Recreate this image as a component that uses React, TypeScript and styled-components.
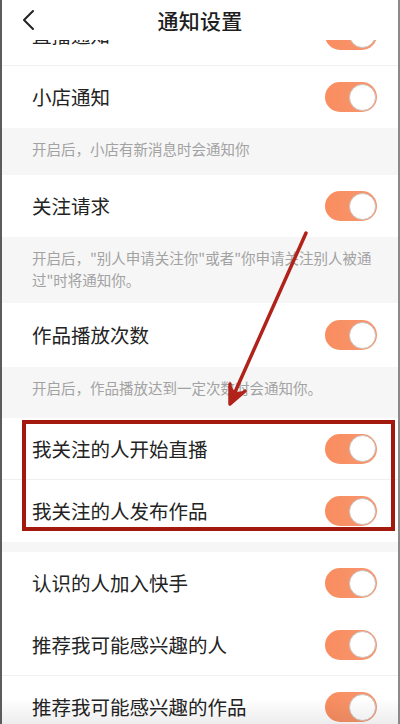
import React from "react";
import styled, { createGlobalStyle } from "styled-components";

const GlobalStyle = createGlobalStyle`
  html, body {
    margin: 0;
    padding: 0;
    background: #ffffff;
  }
  body {
    font-family: "Noto Sans CJK SC", "Noto Sans", sans-serif;
    -webkit-font-smoothing: antialiased;
  }
  * { box-sizing: border-box; }
`;

const Phone = styled.div`
  position: relative;
  width: 400px;
  height: 724px;
  overflow: hidden;
  background: #f6f6f6;
  border-left: 2px solid #5c5c5c;
  border-right: 2px solid #8a8a8a;
  display: flex;
  flex-direction: column;
`;

const Header = styled.header`
  position: relative;
  z-index: 2;
  flex: 0 0 40px;
  height: 40px;
  background: #ffffff;
  display: grid;
  grid-template-columns: 60px 1fr 60px;
  align-items: center;
`;

const BackButton = styled.div`
  display: flex;
  align-items: center;
  padding-left: 20px;
  height: 40px;
`;

const Title = styled.h1`
  margin: 0;
  text-align: center;
  font-size: 21px;
  font-weight: 500;
  color: #1e1e1e;
  line-height: 40px;
  letter-spacing: 0.2px;
`;

const Viewport = styled.div`
  flex: 1 1 auto;
  overflow: hidden;
`;

const Content = styled.div`
  margin-top: -36px;
  display: flex;
  flex-direction: column;
`;

const Group = styled.div`
  background: #ffffff;
  display: flex;
  flex-direction: column;
`;

const Row = styled.div<{ $divider?: boolean }>`
  position: relative;
  height: ${(p) => (p.$h ? p.$h : 62)}px;
  display: flex;
  align-items: center;
  justify-content: space-between;
  padding: 0 21px 0 30px;
  background: #ffffff;
  border-bottom: ${(p) => (p.$divider ? "1px solid #f0f0f0" : "none")};
  margin-left: 0;
` as any;

const Label = styled.span`
  font-size: 19.5px;
  color: #232323;
  line-height: 1;
`;

const Desc = styled.div<{ $pb: number }>`
  padding: 10px 24px ${(p) => p.$pb}px 30px;
  font-size: 14.5px;
  line-height: 22px;
  color: #a2a2a2;
  background: #f6f6f6;
`;

const Gap = styled.div`
  height: 10px;
  background: #f6f6f6;
`;

const Track = styled.div`
  position: relative;
  width: 52px;
  height: 30px;
  border-radius: 15px;
  background: linear-gradient(90deg, #f98d5f 0%, #f79670 100%);
  display: flex;
  align-items: center;
  justify-content: flex-end;
  padding-right: 1.5px;
  flex: 0 0 auto;
`;

const Knob = styled.div`
  width: 27px;
  height: 27px;
  border-radius: 50%;
  background: #ffffff;
  border: 1px solid #c9c3bf;
`;

const Annotation = styled.div`
  position: absolute;
  left: 20px;
  top: 420px;
  width: 373px;
  height: 111px;
  border: 4px solid #a3190e;
  pointer-events: none;
  z-index: 3;
`;

const ArrowLayer = styled.svg`
  position: absolute;
  left: 0;
  top: 0;
  width: 400px;
  height: 724px;
  pointer-events: none;
  z-index: 4;
`;

const BottomShade = styled.div`
  position: absolute;
  left: 0;
  right: 0;
  bottom: 0;
  height: 26px;
  background: linear-gradient(180deg, rgba(0,0,0,0) 0%, rgba(0,0,0,0.07) 100%);
  pointer-events: none;
  z-index: 3;
`;

const Toggle = () => (
  <Track>
    <Knob />
  </Track>
);

type Item = { label: string; divider?: boolean; h?: number };

const SettingRow = ({ label, divider, h }: Item) => (
  <Row $divider={divider} $h={h}>
    <Label>{label}</Label>
    <Toggle />
  </Row>
);

export default function App() {
  return (
    <>
      <GlobalStyle />
      <Phone>
        <Header>
          <BackButton>
            <svg width="14" height="22" viewBox="0 0 14 22">
              <polyline
                points="11,2 2,11 11,20"
                fill="none"
                stroke="#222"
                strokeWidth="2"
                strokeLinecap="round"
                strokeLinejoin="round"
              />
            </svg>
          </BackButton>
          <Title>通知设置</Title>
          <div />
        </Header>
        <Viewport>
          <Content>
            <Group>
              <SettingRow label="直播通知" divider />
              <SettingRow label="小店通知" />
            </Group>
            <Desc $pb={15}>开启后，小店有新消息时会通知你</Desc>
            <Group>
              <SettingRow label="关注请求" />
            </Group>
            <Desc $pb={12}>
              开启后，"别人申请关注你"或者"你申请关注别人被通过"时将通知你。
            </Desc>
            <Group>
              <SettingRow label="作品播放次数" h={64} />
            </Group>
            <Desc $pb={19}>开启后，作品播放达到一定次数时会通知你。</Desc>
            <Group>
              <SettingRow label="我关注的人开始直播" divider />
              <SettingRow label="我关注的人发布作品" />
            </Group>
            <Gap />
            <Group>
              <SettingRow label="认识的人加入快手" />
              <SettingRow label="推荐我可能感兴趣的人" divider />
              <SettingRow label="推荐我可能感兴趣的作品" />
            </Group>
          </Content>
        </Viewport>
        <Annotation />
        <ArrowLayer viewBox="0 0 400 724">
          <line
            x1="304"
            y1="233"
            x2="229"
            y2="401"
            stroke="#b1231a"
            strokeWidth="3.5"
            strokeLinecap="round"
          />
          <polygon points="243,391 228,404 228,384 233,392" fill="#b1231a" />
          <polyline
            points="243,391 228,404 228,384"
            fill="none"
            stroke="#b1231a"
            strokeWidth="3.5"
            strokeLinecap="round"
            strokeLinejoin="round"
          />
        </ArrowLayer>
        <BottomShade />
      </Phone>
    </>
  );
}
